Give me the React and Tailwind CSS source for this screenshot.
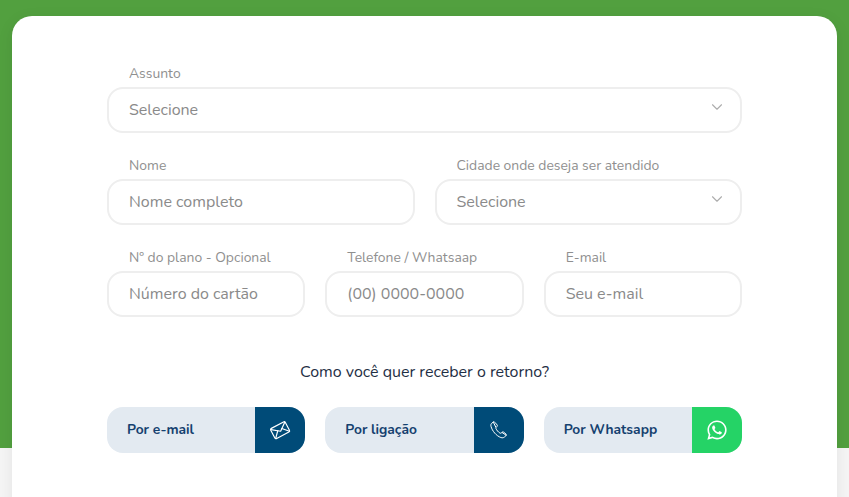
import { ChevronDown } from "lucide-react";
import { FaWhatsapp } from "react-icons/fa";

const fontStack = "font-['Nunito','Noto_Sans','Open_Sans',sans-serif]";

const Field = ({ label, value, select, className = "" }) => {
  return (
    <div className={`flex flex-col ${className}`}>
      <label className="h-[23px] pl-[22px] text-[13.9px] leading-[19px] text-[#8f8f8f]">
        {label}
      </label>
      <div className="flex h-[46px] items-center justify-between rounded-[16px] border-2 border-[#eeeeee] bg-white pl-[20px] pr-[14px]">
        <span className="text-[16px] text-[#8a8a8a]">{value}</span>
        {select && (
          <ChevronDown className="mb-[6px] h-[18px] w-[18px] text-[#adadad]" strokeWidth={1.5} />
        )}
      </div>
    </div>
  );
};

const MailIcon = () => (
  <svg viewBox="0 0 24 24" className="h-[22px] w-[22px] -rotate-[28deg]" fill="none" stroke="white" strokeWidth="1.3" strokeLinejoin="round" strokeLinecap="round">
    <rect x="3" y="6" width="18" height="12.5" rx="1.5" />
    <path d="M3.5 7l8.5 6.5L20.5 7" />
    <path d="M3.5 18l6-6.5M20.5 18l-6-6.5" />
  </svg>
);

const PhoneIcon = () => (
  <svg viewBox="0 0 24 24" className="h-[20px] w-[20px]" fill="none" stroke="white" strokeWidth="1.2" strokeLinejoin="round" strokeLinecap="round">
    <path d="M5 2.6L3.4 3.8C2.3 4.7 2 6 2.4 7.6c1.4 5.6 6.6 11.6 11.8 13.4 1.8.6 3.2.4 4.3-.6l2-1.8c.5-.5.5-1.1 0-1.6l-3-2.5c-.5-.4-1-.4-1.5 0l-1.4 1.1c-.5.4-1 .4-1.5.1-2.2-1.4-3.8-3.4-4.8-5.6-.2-.5-.1-1 .3-1.4l1.1-1.1c.4-.5.5-1 .2-1.5L7.2 3c-.5-.8-1.4-.9-2.2-.4z" />
    <path d="M5.5 3.2l2.6 5.2M16 15.2l4.6 3.1" />
  </svg>
);

const ReturnButton = ({ label, iconBg, children }) => {
  return (
    <button className="flex h-[46px] items-stretch overflow-hidden rounded-[16px] bg-[#e3eaf1]">
      <span className="flex flex-1 items-center pl-[20px] text-[13.8px] font-bold text-[#15416f]">
        {label}
      </span>
      <span className={`flex w-[50px] items-center justify-center ${iconBg}`}>{children}</span>
    </button>
  );
};

export default function App() {
  return (
    <div className={`h-[497px] overflow-hidden bg-[linear-gradient(to_bottom,#52a03f_0,#52a03f_448px,#f5f5f5_448px)] px-[12px] pt-[16px] ${fontStack}`}>
      <div className="h-[520px] w-[825px] rounded-[20px] bg-white px-[95px] pt-[48px] shadow-[0_4px_16px_rgba(0,0,0,0.08)]">
        {/* Assunto */}
        <Field label="Assunto" value="Selecione" select />

        {/* Nome e cidade */}
        <div className="mt-[23px] grid grid-cols-2 gap-[20px]">
          <Field label="Nome" value="Nome completo" />
          <Field label="Cidade onde deseja ser atendido" value="Selecione" select />
        </div>

        {/* Plano, telefone, e-mail */}
        <div className="mt-[23px] grid grid-cols-3 gap-[20px]">
          <Field label="Nº do plano - Opcional" value="Número do cartão" />
          <Field label="Telefone / Whatsaap" value="(00) 0000-0000" />
          <Field label="E-mail" value="Seu e-mail" />
        </div>

        <p className="mt-[44px] text-center text-[16px] leading-[22px] text-[#1f2f45]">
          Como você quer receber o retorno?
        </p>

        {/* Botões de retorno */}
        <div className="mt-[24px] grid grid-cols-3 gap-[20px]">
          <ReturnButton label="Por e-mail" iconBg="bg-[#004b78]">
            <MailIcon />
          </ReturnButton>
          <ReturnButton label="Por ligação" iconBg="bg-[#004b78]">
            <PhoneIcon />
          </ReturnButton>
          <ReturnButton label="Por Whatsapp" iconBg="bg-[#25d366]">
            <FaWhatsapp className="h-[22px] w-[22px] text-white" />
          </ReturnButton>
        </div>
      </div>
    </div>
  );
}
